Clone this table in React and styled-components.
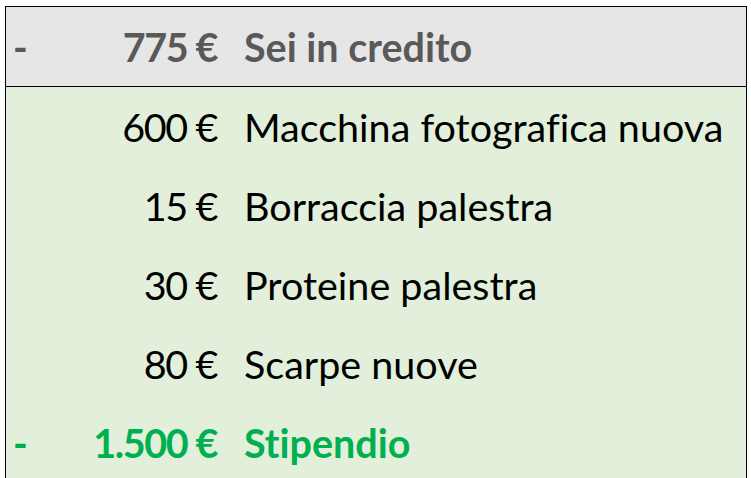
import React from 'react';
import styled, { createGlobalStyle } from 'styled-components';

const GlobalStyle = createGlobalStyle`
  html, body {
    margin: 0;
    padding: 0;
    background: #ffffff;
  }
  body {
    font-family: Lato, "Open Sans", "Liberation Sans", sans-serif;
  }
`;

const Page = styled.div`
  width: 751px;
  height: 478px;
  overflow: hidden;
  padding: 6px 4px 0 5px;
  box-sizing: border-box;
`;

const Sheet = styled.div`
  border: 1px solid #000;
  border-bottom: none;
  background: #e2efda;
`;

const Row = styled.div`
  display: grid;
  grid-template-columns: 40px 173px 1fr;
  align-items: center;
  height: 79px;
  font-size: 39.5px;
  font-variant-ligatures: none;
  font-weight: ${({ $bold }) => ($bold ? 700 : 400)};
  color: ${({ $tone }) =>
    $tone === 'grey' ? '#595959' : $tone === 'green' ? '#00b050' : '#000000'};
  background: ${({ $header }) => ($header ? '#e7e6e6' : 'transparent')};
  border-bottom: ${({ $header }) => ($header ? '1px solid #000' : 'none')};
`;

const Sign = styled.span`
  padding-left: 7px;
`;

const Amount = styled.span`
  text-align: right;
  padding-right: 2px;
  letter-spacing: -1.4px;
  white-space: nowrap;
`;

const Label = styled.span`
  padding-left: 25px;
  white-space: nowrap;
`;

const rows = [
  { sign: '-', amount: '775 €', label: 'Sei in credito', tone: 'grey', bold: true, header: true },
  { amount: '600 €', label: 'Macchina fotografica nuova' },
  { amount: '15 €', label: 'Borraccia palestra' },
  { amount: '30 €', label: 'Proteine palestra' },
  { amount: '80 €', label: 'Scarpe nuove' },
  { sign: '-', amount: '1.500 €', label: 'Stipendio', tone: 'green', bold: true },
];

export default function App() {
  return (
    <>
      <GlobalStyle />
      <Page>
        <Sheet>
          {rows.map((r, i) => (
            <Row key={i} $tone={r.tone} $bold={r.bold} $header={r.header}>
              <Sign>{r.sign || ''}</Sign>
              <Amount>{r.amount}</Amount>
              <Label>{r.label}</Label>
            </Row>
          ))}
        </Sheet>
      </Page>
    </>
  );
}
